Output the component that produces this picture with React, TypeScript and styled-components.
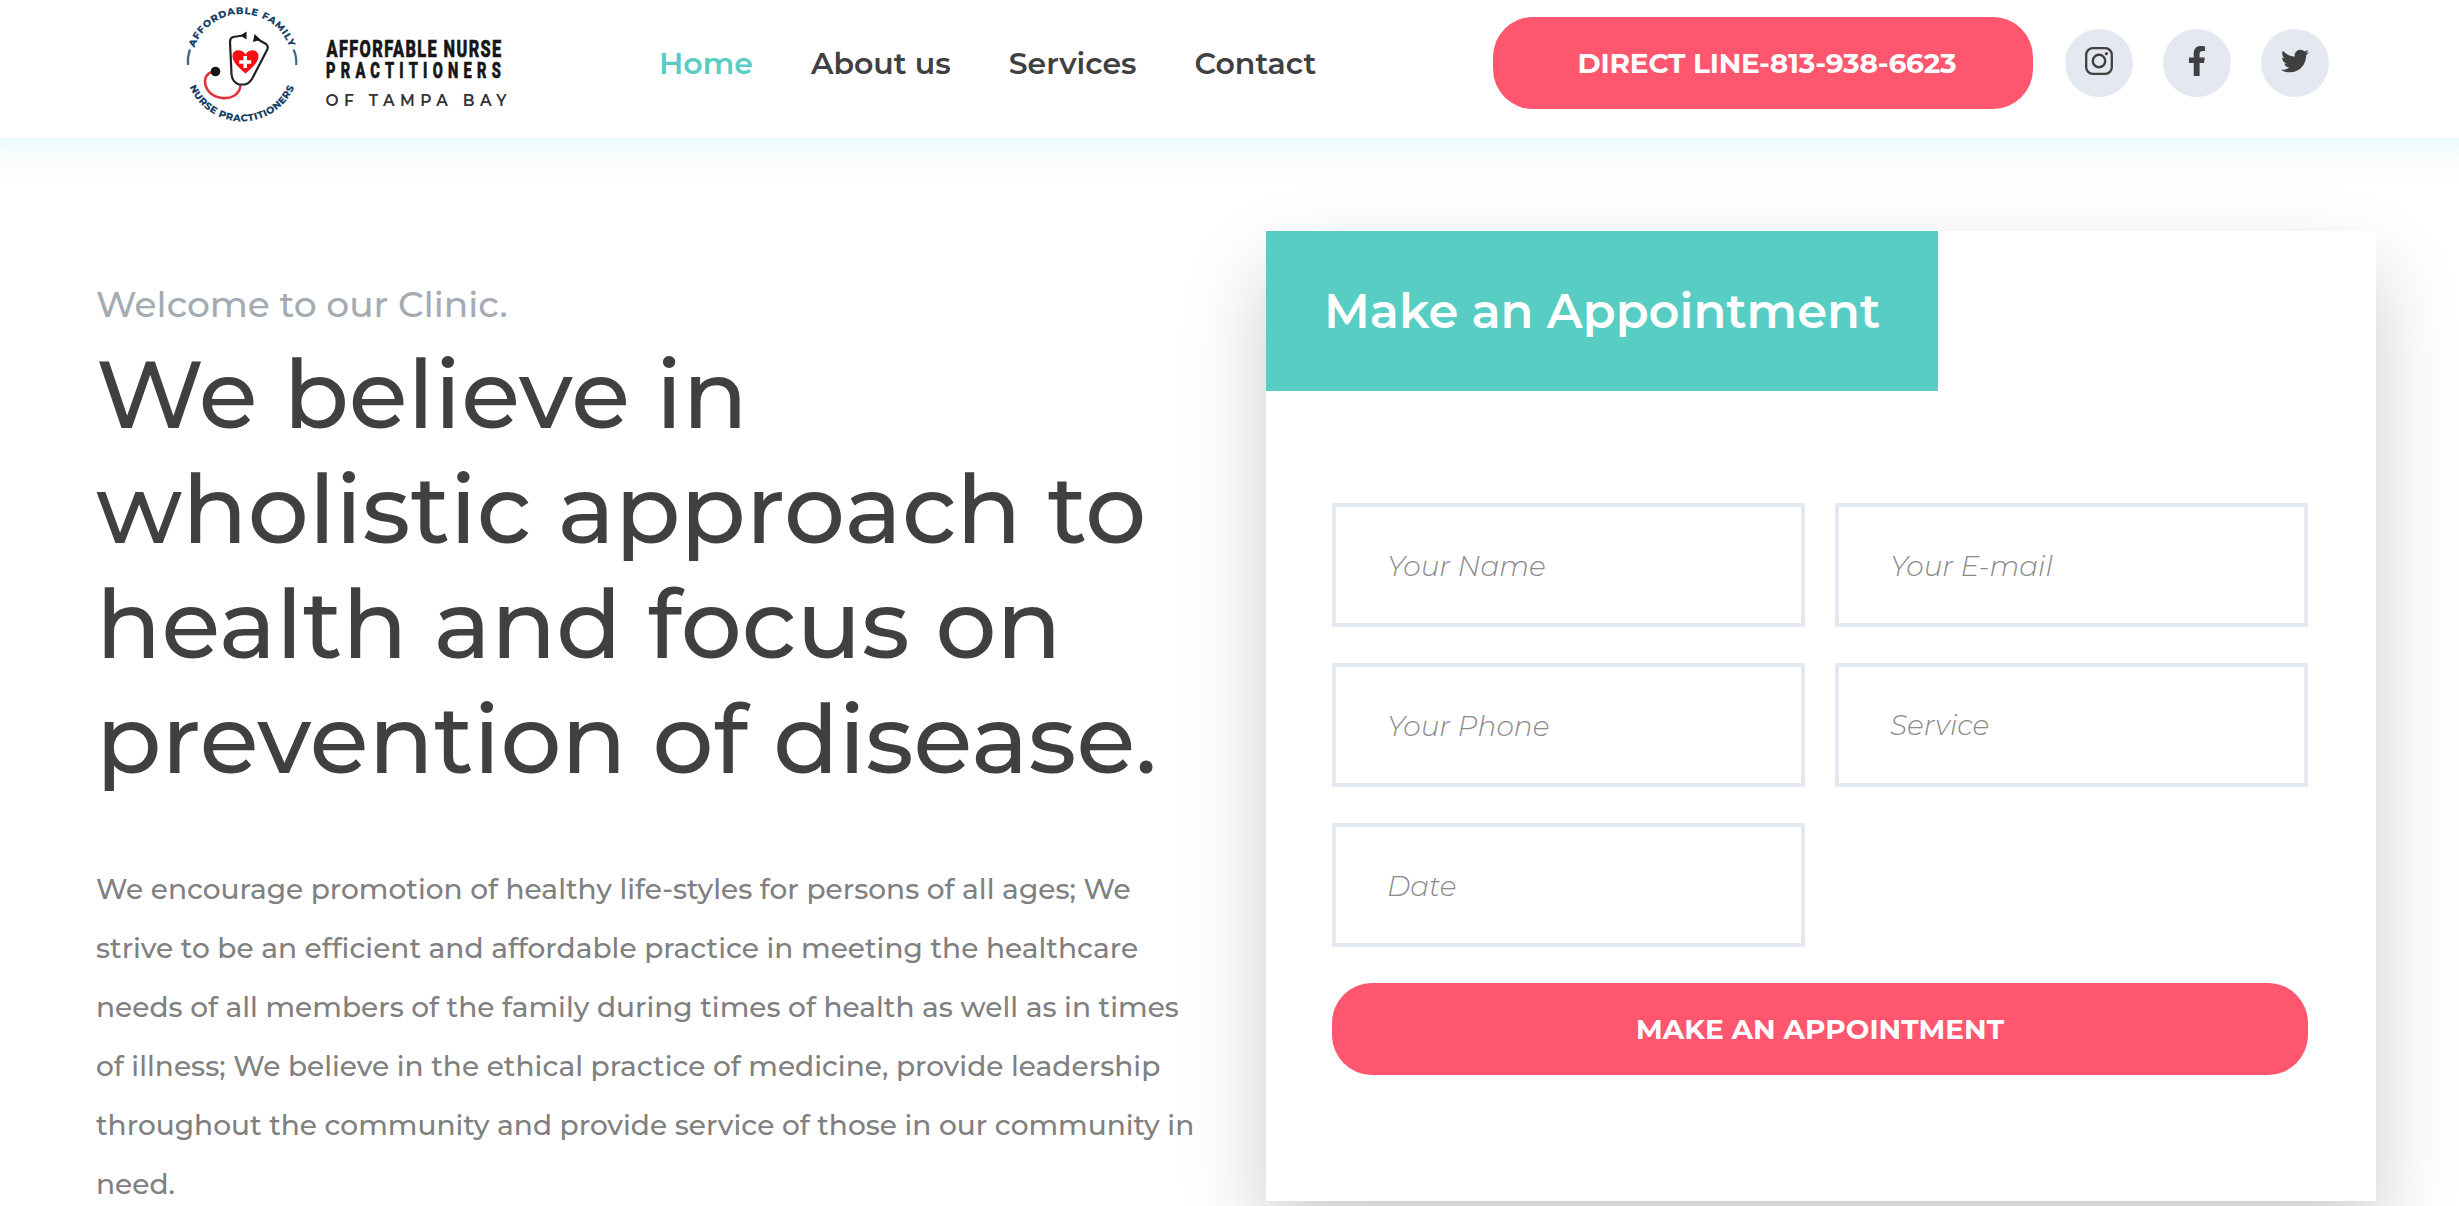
import React from "react";
import styled, { createGlobalStyle } from "styled-components";
import { FaFacebookF, FaTwitter } from "react-icons/fa";

const colors = {
  teal: "#57cdc4",
  coral: "#ff566f",
  ink: "#404040",
  mist: "#e4e9f1",
  body: "#808080",
};

const GlobalStyle = createGlobalStyle`
  *, *::before, *::after { box-sizing: border-box; }
  html, body { height: 100%; overflow: hidden; }
  body {
    margin: 0;
    background: #fff;
    color: ${colors.ink};
    font-family: Montserrat, Inter, sans-serif;
    font-weight: 500;
  }
`;

const Page = styled.div`
  height: 1206px;
  overflow: hidden;
`;

const Header = styled.header`
  display: flex;
  align-items: flex-start;
  height: 138px;
  padding-left: 180px;
  background: #fff;
  box-shadow: 0 -40px 40px 40px rgba(87, 205, 196, 0.24);
`;

const Nav = styled.nav`
  display: flex;
  gap: 58px;
  margin-left: 119px;
  padding-top: 41px;
`;

const NavLink = styled.a<{ $active?: boolean }>`
  color: ${(p) => (p.$active ? colors.teal : colors.ink)};
  font-size: 30px;
  font-weight: 600;
  line-height: 46px;
  white-space: nowrap;
`;

const PillButton = styled.button<{ $width?: string; $tracking?: string; $indent?: string }>`
  width: ${(p) => p.$width ?? "100%"};
  height: 92px;
  padding: 1px 0 0 ${(p) => p.$indent ?? "0"};
  border: 0;
  border-radius: 40px;
  background: ${colors.coral};
  color: #fff;
  font: 700 28px/91px Montserrat, Inter, sans-serif;
  letter-spacing: ${(p) => p.$tracking ?? "normal"};
  white-space: nowrap;
`;

const CallSlot = styled.div`
  display: flex;
  margin: 17px 32px 0 auto;
`;

const Socials = styled.div`
  display: flex;
  gap: 30px;
  margin: 29px 130px 0 0;
`;

const SocialLink = styled.a<{ $size: number }>`
  display: flex;
  align-items: center;
  justify-content: center;
  width: 68px;
  height: 68px;
  padding-bottom: 4px;
  border-radius: 50%;
  background: ${colors.mist};
  color: ${colors.ink};
  font-size: ${(p) => p.$size}px;
`;

const Main = styled.main`
  display: flex;
  align-items: flex-start;
  padding: 93px 83px 0 96px;
`;

const Intro = styled.section`
  width: 1170px;
  padding-top: 45px;
`;

const Welcome = styled.p`
  margin: 0;
  color: #a4abb3;
  font-size: 36px;
  line-height: 56px;
`;

const Headline = styled.h1`
  width: 1090px;
  margin: 4px 0 0;
  font-size: 96px;
  font-weight: 500;
  line-height: 115px;
`;

const Copy = styled.p`
  width: 1106px;
  margin: 64px 0 0;
  color: ${colors.body};
  font-size: 28px;
  line-height: 59px;
  letter-spacing: 0.03px;
`;

const Card = styled.section`
  width: 1110px;
  height: 970px;
  background: #fff;
  box-shadow: 0 40px 80px rgba(0, 0, 0, 0.2);
`;

const CardTitle = styled.h2`
  width: 672px;
  height: 160px;
  margin: 0;
  padding-left: 58px;
  background: ${colors.teal};
  color: #fff;
  font-size: 48px;
  font-weight: 600;
  line-height: 160px;
  white-space: nowrap;
`;

const Form = styled.form`
  display: grid;
  grid-template-columns: 1fr 1fr;
  gap: 36px 30px;
  padding: 112px 68px 0 66px;
`;

const Field = styled.input<{ $lift?: boolean }>`
  width: 100%;
  height: 124px;
  padding: ${(p) => (p.$lift ? "0" : "2px")} 50px 0 51px;
  border: 4px solid ${colors.mist};
  border-radius: 0;
  background: #fff;
  font: italic 300 28px Montserrat, Inter, sans-serif;
  &::placeholder {
    color: #8a8a8a;
    opacity: 1;
  }
`;

const SubmitSlot = styled.div`
  grid-column: 1 / -1;
`;

const fields = ["Your Name", "Your E-mail", "Your Phone", "Service", "Date"];

function InstagramIcon() {
  return (
    <svg width="28" height="28" viewBox="0 0 28 28" fill="none" stroke="currentColor">
      <rect x="1.2" y="1.2" width="25.6" height="25.6" rx="6.5" strokeWidth="2.3" />
      <circle cx="14" cy="14" r="6.2" strokeWidth="2.4" />
      <circle cx="21.4" cy="6.7" r="1.6" fill="currentColor" stroke="none" />
    </svg>
  );
}

function Logo() {
  return (
    <svg width="360" height="130" viewBox="180 0 360 130">
      <defs>
        <path id="sealTop" d="M191.500 64.500a50.500 50.500 0 0 1 101 0" />
        <path id="sealBottom" d="M185 64.500a57 57 0 0 0 114 0" />
      </defs>
      <g fill="#173f68" fontFamily="Montserrat, Inter, sans-serif" fontWeight="800" fontSize="9.8">
        <text letterSpacing="0.65">
          <textPath href="#sealTop" startOffset="50%" textAnchor="middle">
            AFFORDABLE FAMILY
          </textPath>
        </text>
        <text letterSpacing="0.5">
          <textPath href="#sealBottom" startOffset="50%" textAnchor="middle">
            NURSE PRACTITIONERS
          </textPath>
        </text>
      </g>
      <g fill="none" stroke="#3f6a90" strokeWidth="2.2">
        <path d="M190 49.500Q187.200 57 188 65" />
        <path d="M293.500 49.500Q297 57 296.200 65" />
      </g>
      <g fill="none" strokeLinecap="round">
        <path
          d="M240.500 86C239 95 231 99 222 98C211 97 205 89 205 81C205 76 208 73 213 71.500"
          stroke="#e0333f"
          strokeWidth="2.6"
        />
        <path
          d="M243 35.500L233 37Q230 38 230 42L231.500 74Q232 82 239 84.500H245Q249 83.500 252 79L267.500 49Q268.500 46 266 44L258 39.500"
          stroke="#222"
          strokeWidth="2.2"
        />
      </g>
      <circle cx="215.500" cy="71.500" r="4.800" fill="#161616" />
      <path d="M240.500 35.500l6-4v8zM254.500 34l6 5.500-7.500 2.500z" fill="#161616" />
      <path
        d="M245.500 73.500C238 67 232.500 62 232.500 56C232.500 49 242 48.500 245.500 54.500C249 48.500 258.500 49 258.500 56C258.500 62 253 67 245.500 73.500Z"
        fill="#fb0d16"
      />
      <path d="M245.200 56v12M239.200 62h12" stroke="#fff" strokeWidth="3.6" />
      <g fill="#161616" stroke="#161616" strokeWidth="0.7" fontFamily="Roboto, sans-serif" fontWeight="800">
        <text transform="translate(326.500 57.300) scale(.68 1)" fontSize="24" textLength="257">
          AFFORFABLE NURSE
        </text>
        <text transform="translate(326 77.500) scale(.68 1)" fontSize="21.5" textLength="257">
          PRACTITIONERS
        </text>
      </g>
      <text
        x="325.500"
        y="106"
        fill="#333"
        fontFamily="Montserrat, Inter, sans-serif"
        fontWeight="600"
        fontSize="15.5"
        textLength="181"
      >
        OF TAMPA BAY
      </text>
    </svg>
  );
}

export default function App() {
  return (
    <Page>
      <GlobalStyle />
      <Header>
        <Logo />
        <Nav>
          <NavLink $active>Home</NavLink>
          <NavLink>About us</NavLink>
          <NavLink>Services</NavLink>
          <NavLink>Contact</NavLink>
        </Nav>
        <CallSlot>
          <PillButton $width="540px" $tracking="-0.2px" $indent="8px">
            DIRECT LINE-813-938-6623
          </PillButton>
        </CallSlot>
        <Socials>
          <SocialLink $size={28}>
            <InstagramIcon />
          </SocialLink>
          <SocialLink $size={30}>
            <FaFacebookF />
          </SocialLink>
          <SocialLink $size={28}>
            <FaTwitter />
          </SocialLink>
        </Socials>
      </Header>
      <Main>
        <Intro>
          <Welcome>Welcome to our Clinic.</Welcome>
          <Headline>We believe in wholistic approach to health and focus on prevention of disease.</Headline>
          <Copy>
            We encourage promotion of healthy life-styles for persons of all ages; We strive to be an efficient and
            affordable practice in meeting the healthcare needs of all members of the family during times of health as
            well as in times of illness; We believe in the ethical practice of medicine, provide leadership throughout
            the community and provide service of those in our community in need.
          </Copy>
        </Intro>
        <Card>
          <CardTitle>Make an Appointment</CardTitle>
          <Form>
            {fields.map((label) => (
              <Field key={label} placeholder={label} $lift={label === "Service"} />
            ))}
            <SubmitSlot>
              <PillButton type="button">MAKE AN APPOINTMENT</PillButton>
            </SubmitSlot>
          </Form>
        </Card>
      </Main>
    </Page>
  );
}
